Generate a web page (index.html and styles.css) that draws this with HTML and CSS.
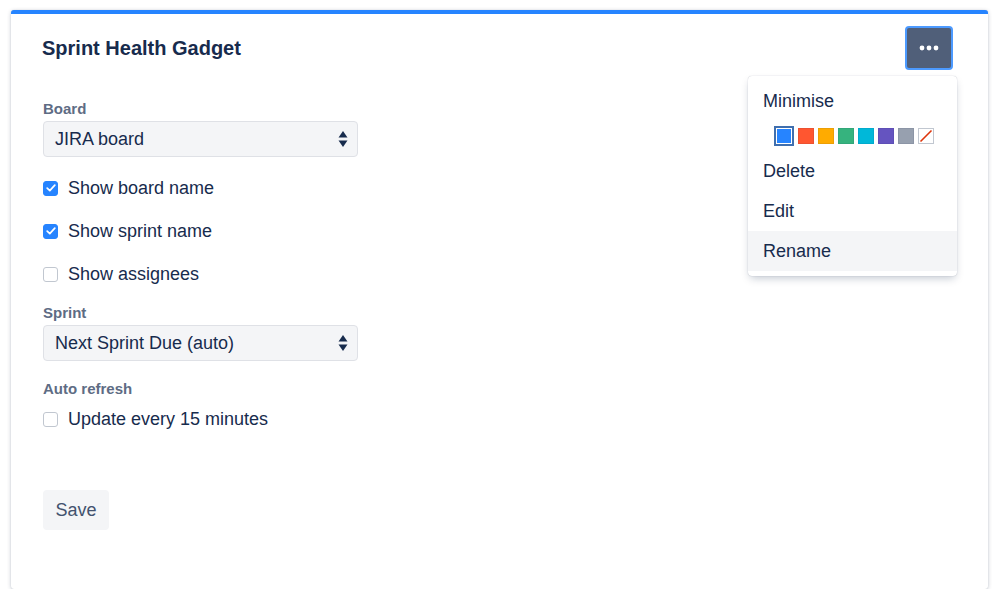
FILE: index.html
```html
<!DOCTYPE html>
<html lang="en">
<head>
<meta charset="UTF-8" />
<title>Sprint Health Gadget</title>
<link rel="stylesheet" href="styles.css">
</head>
<body>

<div class="gadget">
  <header class="gadget-header">
    <h1 class="gadget-title">Sprint Health Gadget</h1>
    <button class="menu-btn" aria-label="More">
      <svg width="20" height="6" viewBox="0 0 20 6"><circle cx="3" cy="3" r="2.4" fill="#fff"/><circle cx="10" cy="3" r="2.4" fill="#fff"/><circle cx="17" cy="3" r="2.4" fill="#fff"/></svg>
    </button>
  </header>

  <div class="dropdown">
    <div class="dropdown-item">Minimise</div>
    <div class="swatches">
      <span class="swatch selected" style="background:#2684FF"></span>
      <span class="swatch" style="background:#FF5630"></span>
      <span class="swatch" style="background:#FFAB00"></span>
      <span class="swatch" style="background:#36B37E"></span>
      <span class="swatch" style="background:#00B8D9"></span>
      <span class="swatch" style="background:#6554C0"></span>
      <span class="swatch" style="background:#97A0AF"></span>
      <span class="swatch none">
        <svg width="14" height="14" viewBox="0 0 14 14"><line x1="12.5" y1="1.5" x2="1.5" y2="12.5" stroke="#DE350B" stroke-width="1.6"/></svg>
      </span>
    </div>
    <div class="dropdown-item">Delete</div>
    <div class="dropdown-item">Edit</div>
    <div class="dropdown-item active">Rename</div>
  </div>

  <form class="gadget-form" onsubmit="return false">
    <div class="field-label first">Board</div>
    <div class="select">
      <span>JIRA board</span>
      <svg width="10" height="18" viewBox="0 0 10 18"><path d="M5 1 L9.5 7.5 H0.5 Z" fill="#172B4D"/><path d="M5 17 L9.5 10.5 H0.5 Z" fill="#172B4D"/></svg>
    </div>

    <label class="check-row">
      <span class="box checked"><svg width="10" height="8" viewBox="0 0 10 8"><path d="M1.2 4.2 L3.8 6.6 L8.8 1.2" fill="none" stroke="#fff" stroke-width="1.7" stroke-linecap="round" stroke-linejoin="round"/></svg></span>
      Show board name
    </label>
    <label class="check-row">
      <span class="box checked"><svg width="10" height="8" viewBox="0 0 10 8"><path d="M1.2 4.2 L3.8 6.6 L8.8 1.2" fill="none" stroke="#fff" stroke-width="1.7" stroke-linecap="round" stroke-linejoin="round"/></svg></span>
      Show sprint name
    </label>
    <label class="check-row">
      <span class="box"></span>
      Show assignees
    </label>

    <div class="field-label">Sprint</div>
    <div class="select">
      <span>Next Sprint Due (auto)</span>
      <svg width="10" height="18" viewBox="0 0 10 18"><path d="M5 1 L9.5 7.5 H0.5 Z" fill="#172B4D"/><path d="M5 17 L9.5 10.5 H0.5 Z" fill="#172B4D"/></svg>
    </div>

    <div class="field-label refresh">Auto refresh</div>
    <label class="check-row tight">
      <span class="box"></span>
      Update every 15 minutes
    </label>

    <button class="save-btn">Save</button>
  </form>
</div>

</body>
</html>
```

FILE: styles.css
```css
body {
  margin: 0; padding: 0;
  font-family: 'Liberation Sans', Arial, sans-serif;
  background: #fff;
  color: #172B4D;
}
.gadget {
  position: relative;
  box-sizing: border-box;
  width: 977px;
  height: 579px;
  margin: 10px 0 0 11px;
  border-top: 4px solid #2684FF;
  border-radius: 3px;
  background: #fff;
  box-shadow: 0 1px 4px rgba(9,30,66,0.22), 0 0 1px rgba(9,30,66,0.2);
  padding: 0 35px 0 31px;
}
.gadget-header {
  display: flex;
  align-items: center;
  justify-content: space-between;
  padding-top: 12px;
}
.gadget-title {
  margin: 0;
  font-size: 20px;
  font-weight: 700;
  line-height: 24px;
  color: #172B4D;
}
.menu-btn {
  box-sizing: border-box;
  width: 48px;
  height: 44px;
  border: 2px solid #4C9AFF;
  border-radius: 4px;
  background: #505F79;
  display: flex;
  align-items: center;
  justify-content: center;
  padding: 0;
}
.dropdown {
  position: absolute;
  top: 62px;
  left: 737px;
  width: 209px;
  padding: 5px 0;
  box-sizing: border-box;
  background: #fff;
  border-radius: 4px;
  box-shadow: 0 4px 8px -2px rgba(9,30,66,0.25), 0 0 1px rgba(9,30,66,0.31);
}
.dropdown-item {
  height: 40px;
  line-height: 40px;
  padding-left: 15px;
  font-size: 18px;
  color: #172B4D;
}
.dropdown-item.active {
  background: #F4F5F7;
}
.swatches {
  display: flex;
  justify-content: center;
  align-items: center;
  gap: 4px;
  height: 30px;
  padding-left: 2px;
}
.swatch {
  box-sizing: border-box;
  width: 16px;
  height: 16px;
  border: 1px solid rgba(9,30,66,0.08);
  display: flex;
  align-items: center;
  justify-content: center;
}
.swatch.selected {
  width: 20px;
  height: 20px;
  border: 2px solid #3F6FAF;
  box-shadow: inset 0 0 0 1px #fff;
}
.swatch.none {
  background: #fff;
  border: 1px solid #C1C7D0;
}
.gadget-form {
  display: flex;
  flex-direction: column;
  align-items: flex-start;
}
.field-label {
  font-size: 15px;
  font-weight: 700;
  line-height: 18px;
  color: #5E6C84;
  margin-top: 18px;
  margin-left: 1px;
}
.field-label.first {
  margin-top: 30px;
}
.field-label.refresh {
  margin-top: 19px;
}
.select {
  box-sizing: border-box;
  width: 315px;
  height: 36px;
  margin: 3px 0 0 1px;
  padding: 0 9px 0 11px;
  background: #F4F5F7;
  border: 1px solid #DFE1E6;
  border-radius: 4px;
  display: flex;
  align-items: center;
  justify-content: space-between;
  font-size: 18px;
  color: #172B4D;
}
.check-row {
  display: flex;
  align-items: center;
  height: 24px;
  margin-top: 19px;
  margin-left: 1px;
  font-size: 18px;
  color: #172B4D;
}
.check-row.tight {
  margin-top: 9px;
}
.box {
  box-sizing: border-box;
  width: 15px;
  height: 15px;
  margin-right: 10px;
  border: 1px solid #C1C7D0;
  border-radius: 3px;
  background: #fff;
  display: flex;
  align-items: center;
  justify-content: center;
}
.box.checked {
  background: #2684FF;
  border-color: #2684FF;
}
.save-btn {
  margin: 59px 0 0 1px;
  width: 66px;
  height: 40px;
  border: none;
  border-radius: 4px;
  background: #F4F5F7;
  font-family: 'Liberation Sans', Arial, sans-serif;
  font-size: 18px;
  color: #42526E;
  padding: 0;
}
```
